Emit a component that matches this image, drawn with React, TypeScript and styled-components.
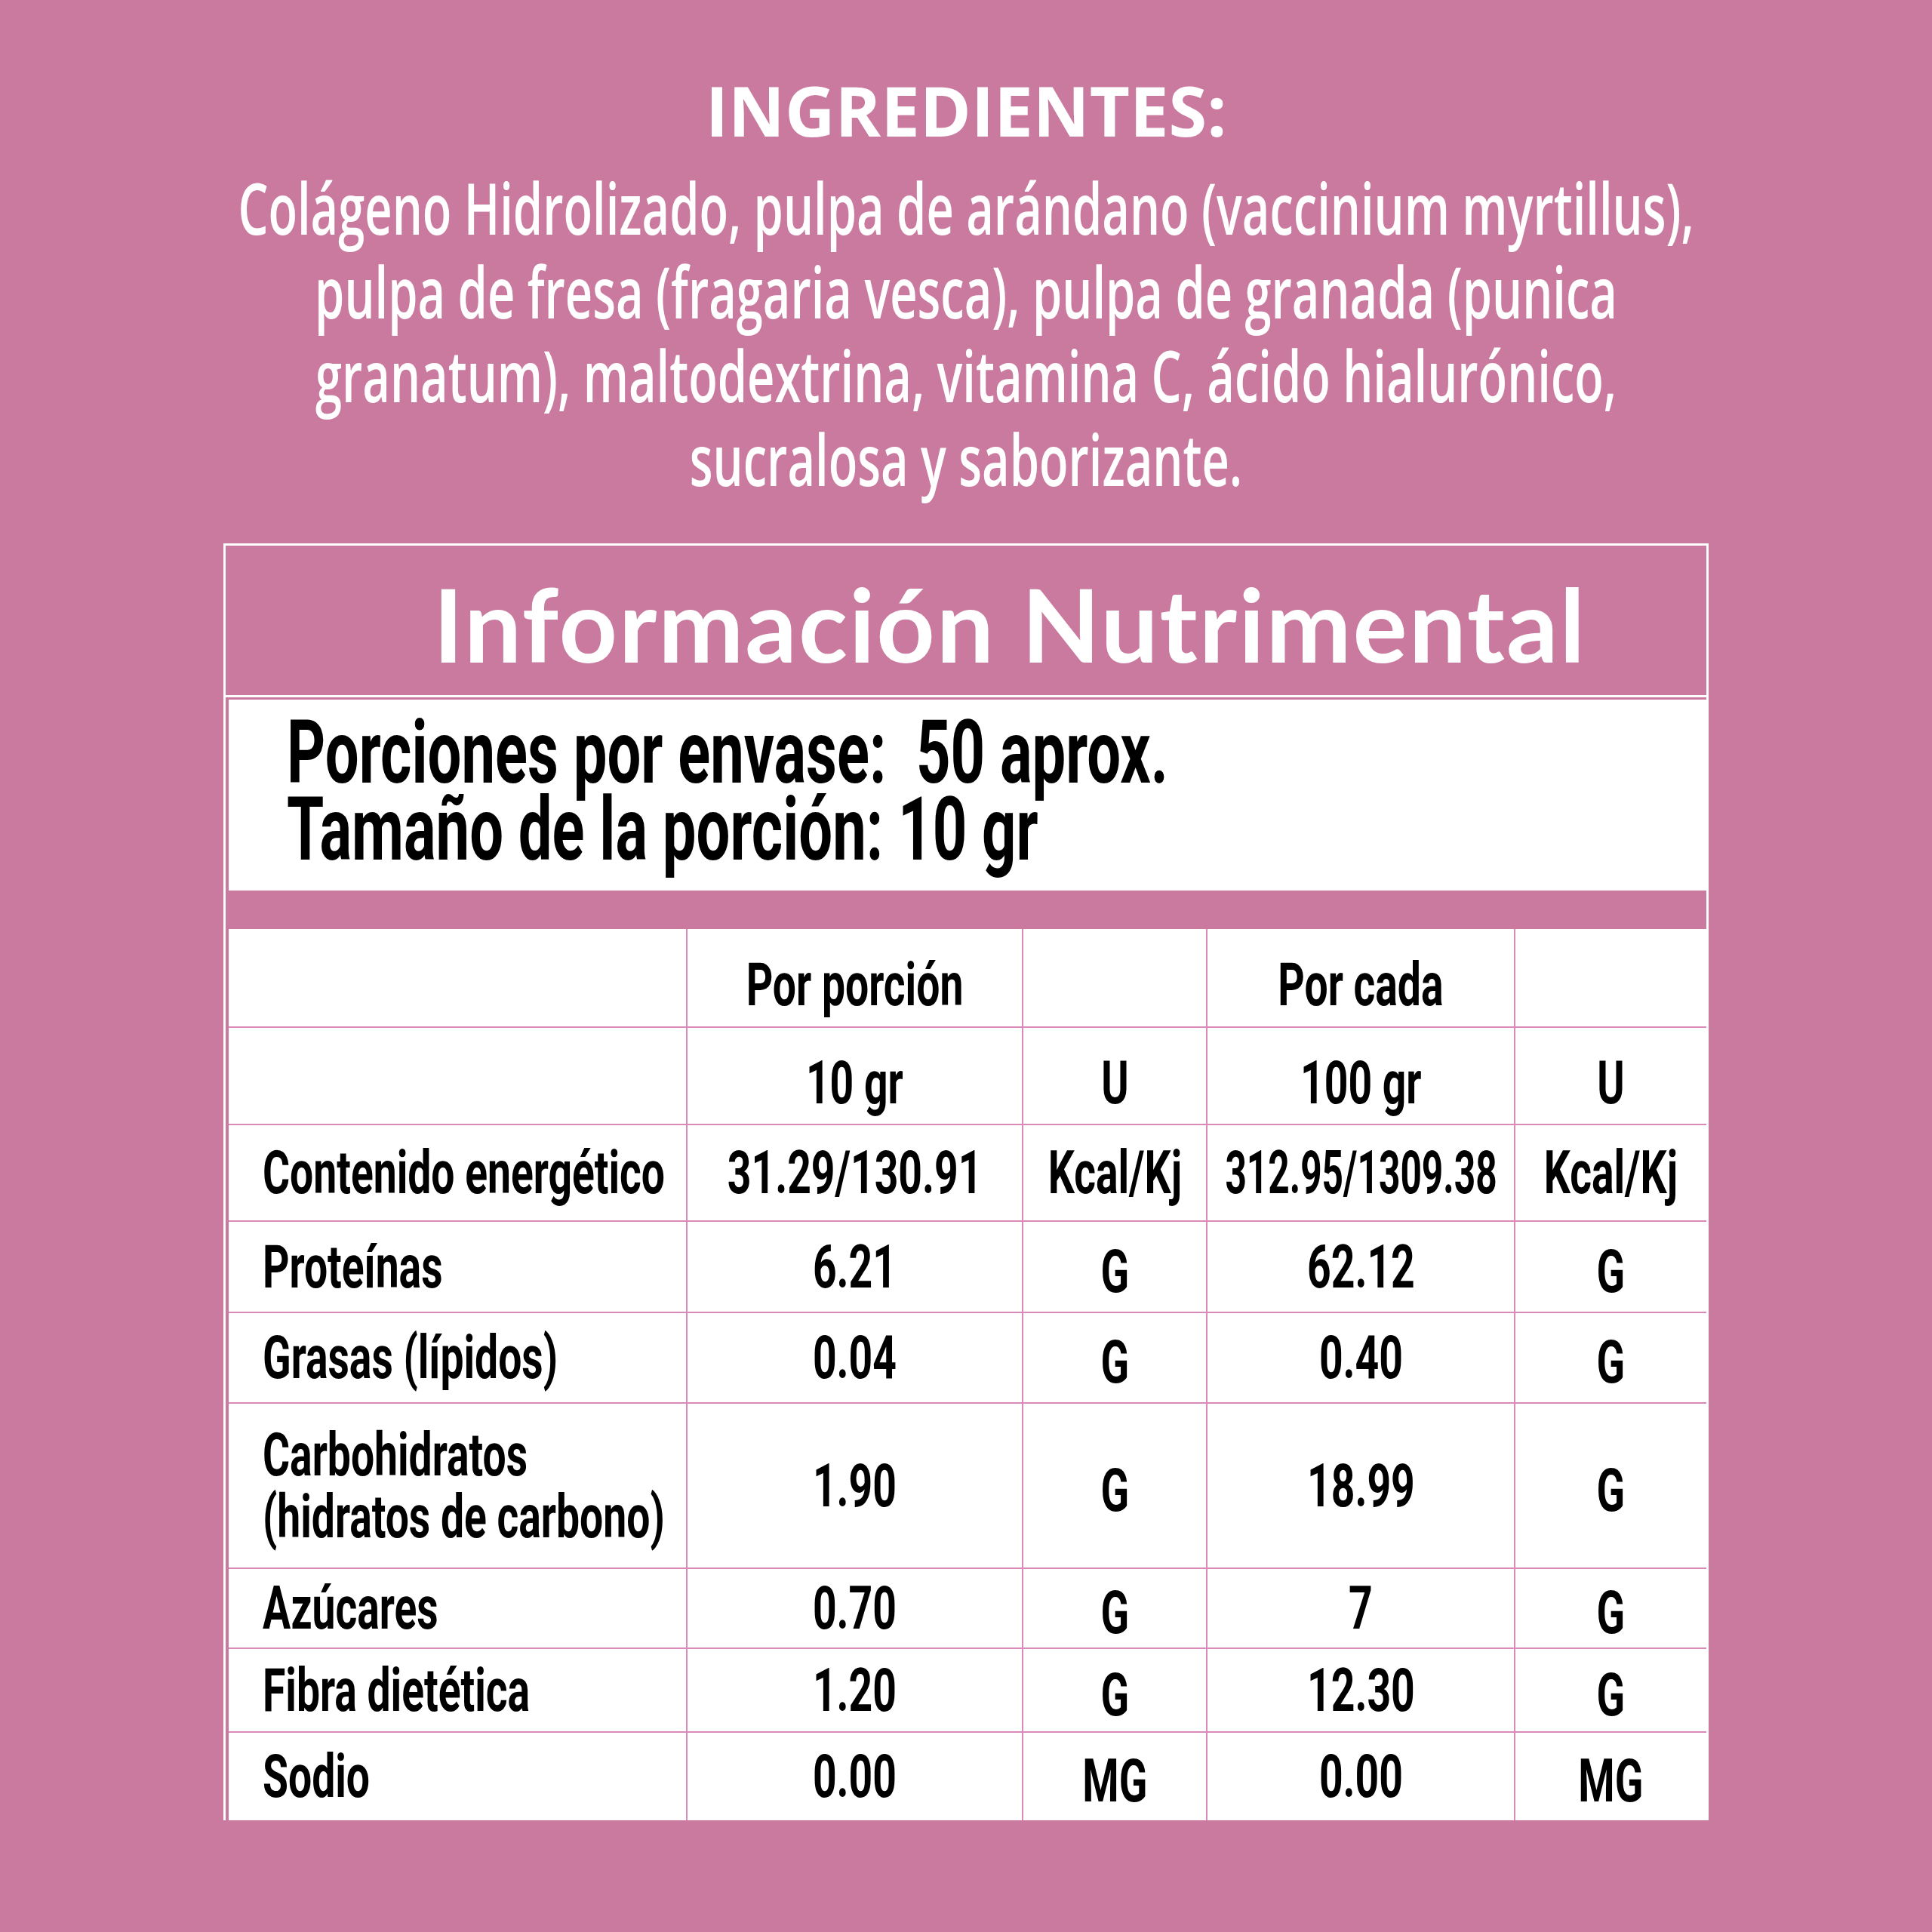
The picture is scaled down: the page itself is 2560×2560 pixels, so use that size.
import React from 'react';
import styled, { createGlobalStyle } from 'styled-components';

const GlobalStyle = createGlobalStyle`
    html, body {
        margin: 0;
        padding: 0;
        overflow: hidden;
    }
`;

const PINK = '#c97a9e';
const LINE = '#d98ab9';

const Page = styled.div`
    width: 2560px;
    height: 2560px;
    background-color: ${PINK};
    display: flex;
    flex-direction: column;
    align-items: center;
    overflow: hidden;
`;

const IngredientsTitle = styled.h1`
    margin: 100px 0 0 0;
    font-family: "Open Sans", "Liberation Sans", sans-serif;
    font-weight: 700;
    font-size: 92px;
    line-height: 92px;
    color: white;
`;

const IngredientsText = styled.div`
    margin-top: 27px;
    width: 3000px;
    flex-shrink: 0;
    font-family: "Open Sans", "Liberation Sans", sans-serif;
    font-weight: 600;
    font-size: 95px;
    line-height: 111px;
    color: white;
    text-align: center;
    white-space: nowrap;
    transform: scaleX(0.665);
    transform-origin: center;
`;

const Card = styled.section`
    margin-top: 57px;
    width: 1962px;
    border: 3px solid white;
    border-bottom: none;
    display: flex;
    flex-direction: column;
`;

const TitleBand = styled.div`
    height: 189px;
    padding: 9px 0 0 116px;
    border-bottom: 3px solid white;
    text-align: center;
    font-family: Lato, "Open Sans", sans-serif;
    font-weight: 700;
    font-size: 135px;
    letter-spacing: 2px;
    line-height: 189px;
    color: white;
`;

const Body = styled.div`
    margin: 3px 0 0 4px;
    background-color: white;
    display: flex;
    flex-direction: column;
`;

const Serving = styled.div`
    height: 234px;
    padding: 19px 0 0 77px;
    font-family: Roboto, "Liberation Sans", sans-serif;
    font-weight: 700;
    font-size: 117px;
    line-height: 102px;
    color: black;
`;

const Squeeze = styled.span<{ $origin?: string; $x?: number }>`
    display: inline-block;
    white-space: nowrap;
    flex-shrink: 0;
    transform: scaleX(${p => p.$x ?? 0.69});
    transform-origin: ${p => p.$origin ?? 'center'};
`;

const Band = styled.div`
    height: 51px;
    background-color: ${PINK};
`;

const Table = styled.div`
    display: grid;
    grid-template-columns: 608px 445px 244px 408px 253px;
    grid-template-rows: 131px 129px 128px 121px 120px 219px 106px 111px 116px;
    font-family: Roboto, "Liberation Sans", sans-serif;
    font-weight: 700;
    font-size: 80px;
    line-height: 82px;
    color: black;
`;

const Cell = styled.div<{ $label?: boolean; $drop?: number; $lastCol?: boolean; $lastRow?: boolean }>`
    display: flex;
    align-items: center;
    justify-content: ${p => (p.$label ? 'flex-start' : 'center')};
    padding-left: ${p => (p.$label ? '45px' : '0')};
    padding-top: ${p => p.$drop ?? 0}px;
    border-right: ${p => (p.$lastCol ? 'none' : `2px solid ${LINE}`)};
    border-bottom: ${p => (p.$lastRow ? 'none' : `2px solid ${LINE}`)};
    min-width: 0;
`;

const ingredients = [
    'Colágeno Hidrolizado, pulpa de arándano (vaccinium myrtillus),',
    'pulpa de fresa (fragaria vesca), pulpa de granada (punica',
    'granatum), maltodextrina, vitamina C, ácido hialurónico,',
    'sucralosa y saborizante.',
];

const rows: string[][] = [
    ['', 'Por porción', '', 'Por cada', ''],
    ['', '10 gr', 'U', '100 gr', 'U'],
    ['Contenido energético', '31.29/130.91', 'Kcal/Kj', '312.95/1309.38', 'Kcal/Kj'],
    ['Proteínas', '6.21', 'G', '62.12', 'G'],
    ['Grasas (lípidos)', '0.04', 'G', '0.40', 'G'],
    ['Carbohidratos\n(hidratos de carbono)', '1.90', 'G', '18.99', 'G'],
    ['Azúcares', '0.70', 'G', '7', 'G'],
    ['Fibra dietética', '1.20', 'G', '12.30', 'G'],
    ['Sodio', '0.00', 'MG', '0.00', 'MG'],
];

const isDropUnit = (text: string) => text === 'G' || text === 'U' || text === 'MG';

// the long kcal value is set tighter in the original so it fits its column
const squeezeFor = (text: string) => (text.length > 12 ? 0.62 : 0.69);

const App: React.FC = () => {
    return (
        <Page>
            <GlobalStyle />
            <IngredientsTitle>INGREDIENTES:</IngredientsTitle>
            <IngredientsText>
                {ingredients.map(line => (
                    <div key={line}>{line}</div>
                ))}
            </IngredientsText>

            <Card>
                <TitleBand>Información Nutrimental</TitleBand>
                <Body>
                    <Serving>
                        <Squeeze $origin="left" $x={0.68}>
                            Porciones por envase:&nbsp; 50 aprox.
                            <br />
                            Tamaño de la porción: 10 gr
                        </Squeeze>
                    </Serving>
                    <Band />
                    <Table>
                        {rows.map((row, r) =>
                            row.map((text, c) => {
                                const header = r < 2;
                                const drop = header ? 18 : isDropUnit(text) ? 12 : 0;
                                return (
                                    <Cell
                                        key={`${r}-${c}`}
                                        $label={c === 0}
                                        $drop={drop}
                                        $lastCol={c === row.length - 1}
                                        $lastRow={r === rows.length - 1}
                                    >
                                        {text && (
                                            <Squeeze
                                                $origin={c === 0 ? 'left' : 'center'}
                                                $x={c === 0 ? 0.69 : squeezeFor(text)}
                                            >
                                                {text.split('\n').map((part, i) => (
                                                    <React.Fragment key={i}>
                                                        {i > 0 && <br />}
                                                        {part}
                                                    </React.Fragment>
                                                ))}
                                            </Squeeze>
                                        )}
                                    </Cell>
                                );
                            })
                        )}
                    </Table>
                </Body>
            </Card>
        </Page>
    );
};

export default App;
